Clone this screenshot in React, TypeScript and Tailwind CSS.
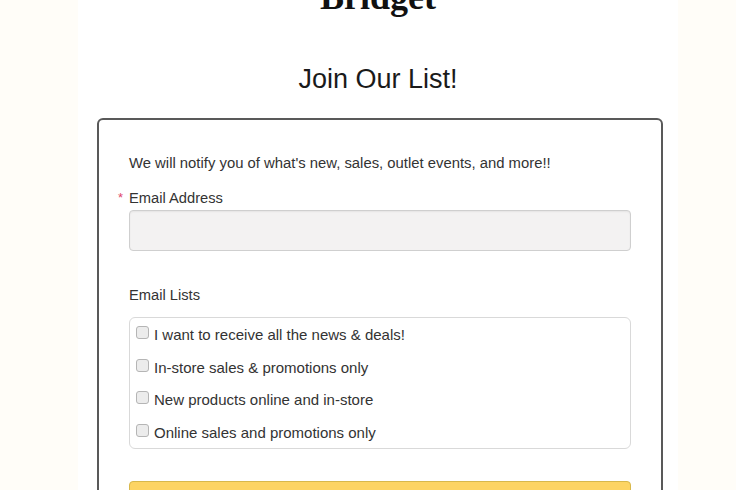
const emailLists = [
  { id: 1, label: 'I want to receive all the news & deals!' },
  { id: 2, label: 'In-store sales & promotions only' },
  { id: 3, label: 'New products online and in-store' },
  { id: 4, label: 'Online sales and promotions only' },
];

const App = () => {
  return (
    <div className="h-[490px] w-full overflow-hidden bg-[#fffdf8]">
      <div className="ml-[78px] flex h-[490px] w-[600px] flex-col bg-white">
        {/* Brand */}
        <h1 className="mt-[-21px] text-center font-['Liberation_Serif',serif] text-[36px] leading-[36px] font-bold text-[#111]">
          Bridget
        </h1>
        <h2 className="mt-[48px] text-center font-['Liberation_Sans',Arial,sans-serif] text-[27px] leading-[32px] text-[#1a1a1a]">
          Join Our List!
        </h2>

        {/* Signup card */}
        <form className="mt-[23px] ml-[19px] h-[400px] w-[566px] shrink-0 rounded-[6px] border-2 border-[#595959] bg-white px-[30px] pt-[33px] font-['Liberation_Sans',Arial,sans-serif] text-[#333]">
          <p className="text-[14.85px] leading-[20px]">
            We will notify you of what's new, sales, outlet events, and more!!
          </p>

          <label className="relative mt-[15px] block text-[14.7px] leading-[20px]">
            <span className="absolute top-[0px] left-[-11px] text-[13px] text-[#e0466b]">*</span>
            Email Address
          </label>
          <input
            type="email"
            className="mt-[2px] block h-[41px] w-full rounded-[4px] border border-[#cfcfcf] bg-[#f3f2f2] px-3 shadow-[inset_0_1px_2px_rgba(0,0,0,0.06)] outline-none"
          />

          <div className="mt-[34px] text-[14.7px] leading-[20px]">Email Lists</div>
          <div className="mt-[12px] rounded-[6px] border border-[#d9d9d9] bg-white">
            {emailLists.map(item => (
              <label key={item.id} className="flex h-[32.5px] items-start pt-[7px] pl-[6px]">
                <input
                  type="checkbox"
                  className="mt-[1px] h-[13px] w-[13px] shrink-0 appearance-none rounded-[3px] border border-[#b5b5b5] bg-[#ececec]"
                />
                <span className="ml-[5px] text-[15px] leading-[20px] text-[#333]">{item.label}</span>
              </label>
            ))}
          </div>

          <button
            type="submit"
            className="mt-[32px] block h-[40px] w-full rounded-[4px] border border-[#d8b84c] bg-[#fdd464]"
          />
        </form>
      </div>
    </div>
  );
};

export default App;
